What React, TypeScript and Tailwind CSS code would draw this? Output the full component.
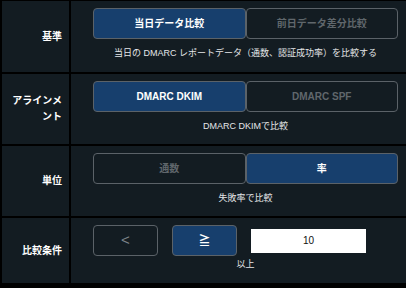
const font = { fontFamily: '"Liberation Sans", "Noto Sans CJK JP", sans-serif' };

function Seg({ label, active }: { label: string; active?: boolean }) {
  return (
    <button
      className={
        "flex-1 h-[31px] rounded-[4px] border border-[#5b6268] text-[10px] font-bold " +
        (active ? "bg-[#173f6d] text-white" : "bg-transparent text-[#60676c]")
      }
    >
      {label}
    </button>
  );
}

function Row({
  label,
  height,
  children,
}: {
  label: string;
  height: string;
  children: React.ReactNode;
}) {
  return (
    <div className={"grid grid-cols-[67px_1fr] gap-x-[2px] " + height}>
      <div className="bg-[#131c22] flex items-center justify-end px-[7px] text-right text-[10px] font-bold leading-[16px] text-white">
        {label}
      </div>
      <div className="bg-[#131c22] pl-[22px] pr-[8px] pt-[7px]">{children}</div>
    </div>
  );
}

function Caption({ text, tight }: { text: string; tight?: boolean }) {
  return (
    <p
      className={
        "text-center text-[9px] leading-[12px] text-[#e4e6e8] " + (tight ? "mt-[2px]" : "mt-[8px]")
      }
    >
      {text}
    </p>
  );
}

export default function App() {
  return (
    <div style={font} className="w-[406px] h-[288px] bg-black pl-[2px] pt-[1px] flex flex-col gap-y-[2px] overflow-hidden">
      <Row label="基準" height="h-[71px]">
        <div className="flex">
          <Seg label="当日データ比較" active />
          <Seg label="前日データ差分比較" />
        </div>
        <Caption text="当日の DMARC レポートデータ（通数、認証成功率）を比較する" />
      </Row>
      <Row label="アラインメント" height="h-[70px]">
        <div className="flex">
          <Seg label="DMARC DKIM" active />
          <Seg label="DMARC SPF" />
        </div>
        <Caption text="DMARC DKIMで比較" />
      </Row>
      <Row label="単位" height="h-[70px]">
        <div className="flex">
          <Seg label="通数" />
          <Seg label="率" active />
        </div>
        <Caption text="失敗率で比較" />
      </Row>
      <Row label="比較条件" height="h-[65px]">
        <div className="flex items-center gap-x-[14px]">
          <button className="w-[65px] h-[31px] rounded-[4px] border border-[#5b6268] text-[15px] text-[#7d8489]">
            &lt;
          </button>
          <button className="w-[65px] h-[31px] rounded-[4px] border border-[#5b6268] bg-[#173f6d] text-[12px] font-bold text-white">
            ≧
          </button>
          <div className="w-[115px] h-[24px] bg-white flex items-center justify-center text-[10px] text-[#111]">
            10
          </div>
        </div>
        <Caption text="以上" tight />
      </Row>
    </div>
  );
}
